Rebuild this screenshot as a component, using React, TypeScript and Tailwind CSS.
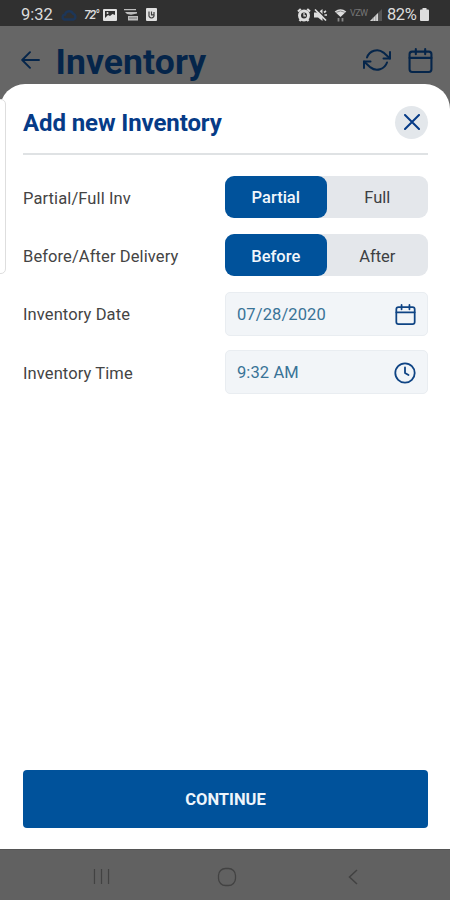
import React, { useState } from 'react';

interface ToggleProps {
  options: [string, string];
  value: string;
  onChange: (value: string) => void;
}

const CalendarIcon = ({ className }: { className: string }) => (
  <svg className={className} viewBox="0 0 24 24" fill="none" stroke="currentColor" strokeWidth="2" strokeLinecap="round" strokeLinejoin="round">
    <rect x="1.5" y="3.5" width="21" height="19.5" rx="2.5" />
    <path d="M1.5 9.5h21M7.5 1v5M16.5 1v5" />
  </svg>
);

const StatusBar = () => (
  <div className="flex h-[26px] shrink-0 items-center bg-[#303030] pt-[3px] pl-[21px] text-[#dcdcdc]">
    <span className="w-[40px] pt-[2px] text-[16.5px] leading-none">9:32</span>
    <svg className="h-[13px] w-[16px]" viewBox="0 0 16 13" fill="none" stroke="#1d3658" strokeWidth="2.4">
      <path d="M3.5 11.5a2.5 2.5 0 0 1 .6-4.9 4.2 4.2 0 0 1 8-.8 3 3 0 0 1 .4 5.7z" />
    </svg>
    <span className="ml-[7px] w-[19px] text-[12px] leading-none font-medium italic tracking-[-1.1px]">72°</span>
    <svg className="h-[12px] w-[14px]" viewBox="0 0 14 12">
      <rect width="14" height="12" rx="1" fill="#e0e0e0" />
      <path d="M2 2h10v4L9.5 5 7 7 5 6 2 9z" fill="#303030" />
      <circle cx="4.5" cy="4" r="1" fill="#e0e0e0" />
    </svg>
    <svg className="ml-[7px] h-[13px] w-[14px]" viewBox="0 0 14 13" fill="#bdbdbd">
      <path d="M0 1h12v1.3H0zM1 4h12v1.5l-6 1.2L3 6zM4 8h10v4.5H4z" />
      <path d="M5 10h8" stroke="#777777" />
    </svg>
    <svg className="ml-[8px] h-[13px] w-[11px]" viewBox="0 0 11 13" fill="none">
      <rect width="11" height="13" rx="1" fill="#e0e0e0" />
      <path d="M3 3.5v3.2a2.6 2.6 0 1 0 5 0V4M5.5 3.5v3.3h2" stroke="#404040" strokeWidth="1.2" />
    </svg>
    <svg className="ml-[140px] h-[14px] w-[14px]" viewBox="0 0 14 14" fill="none" stroke="#dedede">
      <circle cx="7" cy="7.5" r="4.5" strokeWidth="3" />
      <path d="M1 3.5 3.8 1M13 3.5 10.2 1M2.5 13l1.6-1.8M11.5 13l-1.6-1.8" strokeWidth="2.2" />
      <path d="M7 5v2.8h2" strokeWidth="1.2" />
    </svg>
    <svg className="ml-[3px] h-[14px] w-[13px]" viewBox="0 0 13 14">
      <path d="M0 4.5h4L8.5 1v12L4 9.500H0z" fill="#dedede" />
      <path d="M2 .5l11 11" stroke="#303030" strokeWidth="1.3" />
      <path d="M1 1.5l11 11M10 4.500 12 3M10.500 7H13" stroke="#dedede" strokeWidth="1.7" />
    </svg>
    <svg className="ml-[7px] h-[14px] w-[13px]" viewBox="0 0 13 14">
      <path d="M.7 3.5Q6.5-.8 12.3 3.5L6.5 9z" fill="#dedede" />
      <path d="M2.3 4.3q4.2-2.6 8.4 0" stroke="#666666" strokeWidth=".7" fill="none" />
      <path d="M4.5 10v3.5M8.5 10v3.5" stroke="#888888" strokeWidth="1.8" />
    </svg>
    <span className="ml-[3px] w-[20px] pb-[3px] text-[9px] leading-none tracking-[-0.6px] text-[#777777]">VZW</span>
    <svg className="h-[12px] w-[12px]" viewBox="0 0 12 12">
      <path d="M0 12 12 0v12z" fill="#555555" />
      <path d="M0 12 8 4v8z" fill="#d5d5d5" />
      <path d="M3.2 8v4M5.8 6v6" stroke="#777777" strokeWidth=".6" />
    </svg>
    <span className="ml-[5px] w-[33px] pt-[2px] text-[16.5px] leading-none tracking-[-0.4px]">82%</span>
    <svg className="h-[13px] w-[9px]" viewBox="0 0 9 13" fill="#dedede">
      <path d="M2.5 0h4v1.5h1.5a1 1 0 0 1 1 1V12a1 1 0 0 1-1 1H1a1 1 0 0 1-1-1V2.5a1 1 0 0 1 1-1h1.5z" />
    </svg>
  </div>
);

const Toggle: React.FC<ToggleProps> = ({ options, value, onChange }) => (
  <div className="flex h-[42px] w-[203px] rounded-[9px] bg-[#e4e7eb]">
    {options.map((option) => (
      <button
        key={option}
        onClick={() => onChange(option)}
        className={`h-full flex-1 rounded-[9px] pt-[3px] text-[16.5px] ${
          option === value ? 'bg-[#00529b] font-medium text-[#f1f6fb]' : 'text-[#3d3f42]'
        }`}
      >
        {option}
      </button>
    ))}
  </div>
);

const Row = ({ label, children }: { label: string; children: React.ReactNode }) => (
  <div className="flex h-[58.3px] items-center justify-between">
    <span className="pt-[4px] text-[16.5px] tracking-[0.1px] text-[#444444]">{label}</span>
    {children}
  </div>
);

const Field = ({ value, children }: { value: string; children: React.ReactNode }) => (
  <div className="flex h-[44px] w-[203px] items-center justify-between rounded-[5px] border border-[#e9edf1] bg-[#f2f5f8] px-[11px] text-[#0f4484]">
    <span className="pt-[3px] text-[16.5px] tracking-[0.1px] text-[#397397]">{value}</span>
    {children}
  </div>
);

export default function App() {
  const [fill, setFill] = useState('Partial');
  const [delivery, setDelivery] = useState('Before');

  return (
    <div className="relative flex h-[900px] w-[450px] flex-col overflow-hidden bg-[#666666] font-['Roboto',sans-serif]">
      <StatusBar />

      <header className="flex h-[58px] shrink-0 items-center pt-[12px] pr-[17px] pl-[21px] text-[#05254a]">
        <svg className="h-[18px] w-[19px] -translate-y-[1px]" viewBox="0 0 19 18" fill="none" stroke="currentColor" strokeWidth="1.9" strokeLinecap="round" strokeLinejoin="round">
          <path d="M18 9H1.5M9 1.2 1.2 9 9 16.8" />
        </svg>
        <h1 className="ml-[15.5px] pt-[4px] text-[35.5px] leading-none font-bold tracking-[0.1px]">Inventory</h1>
        <svg className="ml-auto h-[24px] w-[28px] -translate-y-[1px]" viewBox="0 0 28 24" fill="none" stroke="currentColor" strokeWidth="2" strokeLinecap="round" strokeLinejoin="round">
          <path d="M27 4v6.5h-6.5M1 20v-6.5h6.5" />
          <path d="M4 9.5A10.5 10.5 0 0 1 20.5 4.6L27 10.5M1 13.5l6.5 5.9A10.5 10.5 0 0 0 24 14.5" />
        </svg>
        <CalendarIcon className="ml-[17px] h-[25px] w-[25px] -translate-y-[1px]" />
      </header>

      <main className="flex h-[765px] shrink-0 flex-col rounded-t-[25px] bg-white pr-[22px] pl-[23px]">
        <div className="flex h-[71px] shrink-0 items-center justify-between border-b-2 border-[#dfe2e4] pt-[7px]">
          <h2 className="pt-[2px] text-[24px] leading-none font-bold tracking-[-0.1px] text-[#063b87]">Add new Inventory</h2>
          <button aria-label="Close" className="flex h-[33px] w-[33px] items-center justify-center rounded-full bg-[#e3e7eb] text-[#063b87]">
            <svg className="h-[16px] w-[16px]" viewBox="0 0 16 16" stroke="currentColor" strokeWidth="2" strokeLinecap="round">
              <path d="M1 1l14 14M15 1 1 15" />
            </svg>
          </button>
        </div>

        <div className="mt-[13px] flex flex-col">
          <Row label="Partial/Full Inv">
            <Toggle options={['Partial', 'Full']} value={fill} onChange={setFill} />
          </Row>
          <Row label="Before/After Delivery">
            <Toggle options={['Before', 'After']} value={delivery} onChange={setDelivery} />
          </Row>
          <Row label="Inventory Date">
            <Field value="07/28/2020">
              <CalendarIcon className="mt-[2px] h-[21px] w-[21px]" />
            </Field>
          </Row>
          <Row label="Inventory Time">
            <Field value="9:32 AM">
              <svg className="mt-[1px] h-[22px] w-[22px]" viewBox="0 0 22 22" fill="none" stroke="currentColor" strokeWidth="1.8" strokeLinecap="round" strokeLinejoin="round">
                <circle cx="11" cy="11" r="9.7" />
                <path d="M11 5.500V11l3.500 2" />
              </svg>
            </Field>
          </Row>
        </div>

        <button className="mt-auto mb-[21px] h-[58px] shrink-0 rounded-[4px] bg-[#00529b] pt-[2px] text-[16.5px] font-bold text-[#eef5fb]">
          CONTINUE
        </button>
      </main>

      <nav className="flex flex-1 items-center border-t border-[#555555] bg-[#616161] pt-[3px] pl-[93px] text-[#424242]">
        <svg className="h-[15px] w-[17px]" viewBox="0 0 17 16" stroke="currentColor" strokeWidth="1.3">
          <path d="M1 0v16M8.5 0v16M16 0v16" />
        </svg>
        <svg className="ml-[107px] h-[20px] w-[20px]" viewBox="0 0 20 20" fill="none" stroke="currentColor" strokeWidth="1.3">
          <rect x="1.5" y="1.5" width="17" height="17" rx="7" />
        </svg>
        <svg className="ml-[111px] h-[16px] w-[10px]" viewBox="0 0 10 16" fill="none" stroke="currentColor" strokeWidth="1.5">
          <path d="M9 1 1.5 8 9 15" />
        </svg>
      </nav>

      {/* edge panel handle */}
      <div className="absolute top-[99px] -left-[5px] h-[175px] w-[11px] rounded-[5px] border border-[#dedede] bg-white" />
    </div>
  );
}
